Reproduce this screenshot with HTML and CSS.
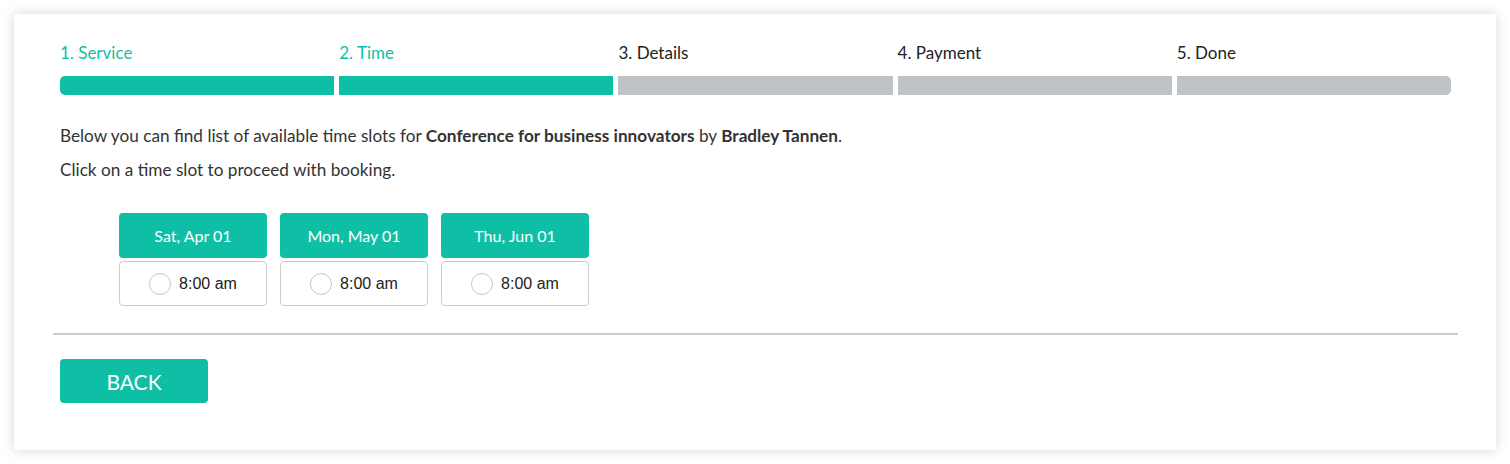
FILE: index.html
```html
<!DOCTYPE html>
<html lang="en">
<head>
  <meta charset="UTF-8">
  <title>Booking - Time</title>
  <link rel="stylesheet" href="styles.css">
</head>
<body>
  <div class="card">
    <div class="steps">
      <div class="step done"><span>1. Service</span><div class="bar"></div></div>
      <div class="step done"><span>2. Time</span><div class="bar"></div></div>
      <div class="step"><span>3. Details</span><div class="bar"></div></div>
      <div class="step"><span>4. Payment</span><div class="bar"></div></div>
      <div class="step"><span>5. Done</span><div class="bar"></div></div>
    </div>

    <p class="info">Below you can find list of available time slots for <b>Conference for business innovators</b> by <b>Bradley Tannen</b>.</p>
    <p class="info">Click on a time slot to proceed with booking.</p>

    <div class="slots">
      <div class="day">
        <div class="date">Sat, Apr 01</div>
        <label class="time"><span class="radio"></span>8:00 am</label>
      </div>
      <div class="day">
        <div class="date">Mon, May 01</div>
        <label class="time"><span class="radio"></span>8:00 am</label>
      </div>
      <div class="day">
        <div class="date">Thu, Jun 01</div>
        <label class="time"><span class="radio"></span>8:00 am</label>
      </div>
    </div>

    <hr>

    <button class="back">BACK</button>
  </div>
</body>
</html>
```

FILE: styles.css
```css
:root {
  --teal: #0fbfa5;
  --grey-bar: #bdc3c7;
  --text: #333;
}

* {
  box-sizing: border-box;
  margin: 0;
  padding: 0;
}

body {
  background: #fff;
  font-family: 'Lato', sans-serif;
  color: var(--text);
}

.card {
  margin: 14px;
  width: 1482px;
  height: 436px;
  background: #fff;
  box-shadow: 0 0 12px rgba(0,0,0,0.16);
  padding: 29px 45px 0 46px;
}

.steps {
  display: flex;
  gap: 5px;
}

.step {
  flex: 1 1 0;
}

.step span {
  display: block;
  font-size: 17px;
  line-height: 20px;
  color: #222;
  margin-bottom: 13px;
}

.step.done span {
  color: var(--teal);
}

.bar {
  height: 19px;
  background: var(--grey-bar);
}

.step.done .bar {
  background: var(--teal);
}

.step:first-child .bar {
  border-radius: 5px 0 0 5px;
}

.step:last-child .bar {
  border-radius: 0 5px 5px 0;
}

.info {
  font-size: 17.2px;
  line-height: 20px;
  margin-top: 14px;
}

.steps + .info {
  margin-top: 31px;
}

.info b {
  font-weight: bold;
}

.slots {
  display: flex;
  gap: 13px;
  padding-left: 59px;
  margin-top: 33px;
}

.day {
  width: 148px;
}

.date {
  height: 45px;
  line-height: 45px;
  background: var(--teal);
  color: #fff;
  text-align: center;
  font-size: 16px;
  border-radius: 4px;
  margin-bottom: 3px;
}

.time {
  display: flex;
  align-items: center;
  justify-content: center;
  gap: 8px;
  height: 45px;
  border: 1px solid #ccc;
  border-radius: 4px;
  font-family: 'Liberation Sans', Arial, sans-serif;
  font-size: 16px;
  color: #222;
}

.radio {
  width: 22px;
  height: 22px;
  border: 1px solid #c8c8c8;
  border-radius: 50%;
  background: #fff;
}

hr {
  border: none;
  border-top: 2px solid #ccc;
  margin: 27px -7px 24px;
}

.back {
  width: 148px;
  height: 44px;
  border: none;
  border-radius: 4px;
  background: var(--teal);
  color: #fff;
  font-family: 'Lato', sans-serif;
  font-size: 21px;
  cursor: pointer;
}
```
